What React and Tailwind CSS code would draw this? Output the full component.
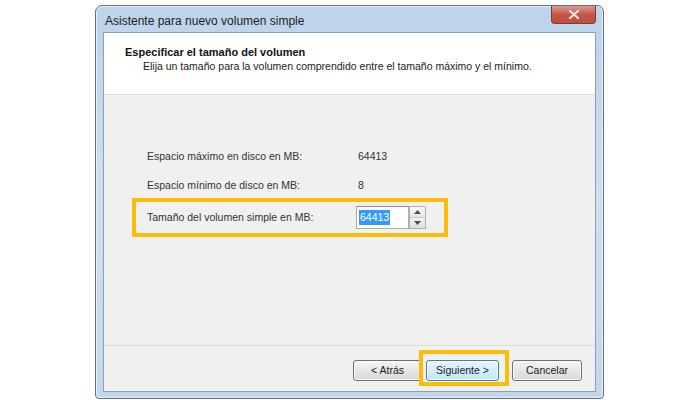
import React from 'react';

function Spinner() {
  return (
    <div className="flex flex-col w-[17px] h-[23px] border border-[#a9b3bd] bg-[#f3f3f3]">
      <div className="flex-1 flex items-center justify-center border-b border-[#c8ced4] bg-gradient-to-b from-[#fafafa] to-[#e6e6e6]">
        <svg width="7" height="4" viewBox="0 0 7 4"><path d="M0 4 L3.5 0 L7 4 Z" fill="#4d4d4d" /></svg>
      </div>
      <div className="flex-1 flex items-center justify-center bg-gradient-to-b from-[#f3f3f3] to-[#dedede]">
        <svg width="7" height="4" viewBox="0 0 7 4"><path d="M0 0 L3.5 4 L7 0 Z" fill="#4d4d4d" /></svg>
      </div>
    </div>
  );
}

function WinButton({ children, active }) {
  return (
    <button
      className={
        active
          ? 'w-full h-[21px] rounded-[3px] border border-[#3c7fb1] bg-gradient-to-b from-[#eaf6fd] to-[#bee6fd] text-[10.5px] text-[#1a1a1a] shadow-[inset_0_0_0_1px_#ffffff]'
          : 'w-full h-[21px] rounded-[3px] border border-[#707070] bg-gradient-to-b from-[#f4f4f4] to-[#d9d9d9] text-[10.5px] text-[#1a1a1a] shadow-[inset_0_0_0_1px_#fbfbfb]'
      }
    >
      {children}
    </button>
  );
}

export default function App() {
  return (
    <div className="w-[700px] h-[400px] bg-white overflow-hidden pl-[95px] pt-[5px] font-['Liberation_Sans',Arial,sans-serif]">
      {/* Dialog window */}
      <div className="w-[509px] h-[394px] flex flex-col rounded-t-[7px] rounded-b-[4px] border border-[#5f6f80] bg-gradient-to-b from-[#bcd3ea] via-[#cfe0f1] to-[#c4d8ec] shadow-[inset_0_0_0_1px_#e8f1fa]">
        {/* Title bar */}
        <div className="h-[26px] flex items-start justify-between pl-[9px] pr-[7px]">
          <span className="mt-[8px] text-[12px] leading-[14px] text-[#1e1e1e]">Asistente para nuevo volumen simple</span>
          <div className="w-[45px] h-[18px] rounded-b-[4px] border border-t-0 border-[#7a3a35] bg-gradient-to-b from-[#dc9a8c] via-[#c3574a] to-[#bf4d40] flex items-center justify-center">
            <svg width="10" height="9" viewBox="0 0 10 9">
              <path d="M1 1 L9 8 M9 1 L1 8" stroke="#f2e6e4" strokeWidth="2.2" strokeLinecap="round" />
            </svg>
          </div>
        </div>

        {/* Client area */}
        <div className="flex-1 mx-[7px] mb-[6px] border border-[#8aa0b6] bg-[#f0f0f0] flex flex-col">
          {/* Header */}
          <div className="h-[62px] bg-white border-b border-[#d5dfe5] pl-[21px] pt-[13px]">
            <div className="text-[11px] font-bold leading-[13px] text-[#111]">Especificar el tamaño del volumen</div>
            <div className="mt-[1px] pl-[18px] text-[10.5px] leading-[13px] text-[#222]">
              Elija un tamaño para la volumen comprendido entre el tamaño máximo y el mínimo.
            </div>
          </div>

          {/* Body */}
          <div className="flex-1 pt-[52px] pl-[28px] text-[10.5px] text-[#333]">
            <div className="flex items-center h-[20px] pl-[15px]">
              <span className="w-[211px]">Espacio máximo en disco en MB:</span>
              <span>64413</span>
            </div>
            <div className="flex items-center h-[20px] pl-[15px] mt-[9px]">
              <span className="w-[211px]">Espacio mínimo de disco en MB:</span>
              <span>8</span>
            </div>
            <div className="mt-[2px] w-[316px] h-[39px] border-4 border-[#fbbc0a] flex items-center pl-[11px]">
              <span className="w-[209px]">Tamaño del volumen simple en MB:</span>
              <div className="flex items-center">
                <div className="w-[53px] h-[23px] bg-white border border-[#abadb3] border-t-[#8c8f96] flex items-center pl-[2px]">
                  <span className="bg-[#3399ff] text-white px-[1px] leading-[15px]">64413</span>
                </div>
                <Spinner />
              </div>
            </div>
          </div>

          {/* Footer */}
          <div className="h-[46px] border-t border-[#dcdcdc] flex items-start justify-end pt-[14px] pr-[13px] relative">
            <div className="w-[69px] flex"><WinButton>&lt; Atrás</WinButton></div>
            <div className="w-[73px] ml-[4px] flex"><WinButton active>Siguiente &gt;</WinButton></div>
            <div className="w-[70px] ml-[13px] flex"><WinButton>Cancelar</WinButton></div>
            {/* highlight annotation */}
            <div className="absolute left-[315px] top-[4px] w-[90px] h-[36px] border-4 border-[#fbbc0a] pointer-events-none" />
          </div>
        </div>
      </div>
    </div>
  );
}
